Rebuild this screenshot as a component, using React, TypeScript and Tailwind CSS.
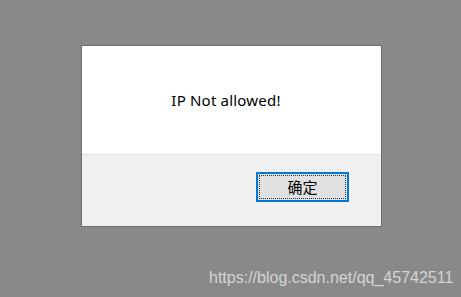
export default function App() {
  return (
    <div className="flex h-[297px] w-[461px] flex-col bg-[#898989] pl-[81px] pt-[45px] font-['Noto_Sans','Noto_Sans_CJK_SC',sans-serif]">
      <div className="flex h-[182px] w-[301px] flex-col border border-[#6e6e6e] bg-[#f0f0f0]">
        <div className="flex h-[109px] items-center justify-center border-b border-[#dfdfdf] bg-white pr-[11px] pt-[1px]">
          <span className="text-[15px] tracking-[0.2px] text-black">IP Not allowed!</span>
        </div>
        <div className="flex justify-end pr-[32px] pt-[17px]">
          <button className="flex h-[30px] w-[93px] items-center justify-center border-2 border-[#0078d7] bg-[#e1e1e1] p-px">
            <span className="flex h-full w-full items-center justify-center border border-dotted border-[#333] text-[15px] leading-none text-black">
              确定
            </span>
          </button>
        </div>
      </div>
      <div className="mt-auto pb-[7px] pl-[128px] font-['Liberation_Sans',sans-serif] text-[16px] text-[#d4d4d4]">
        https://blog.csdn.net/qq_45742511
      </div>
    </div>
  );
}
